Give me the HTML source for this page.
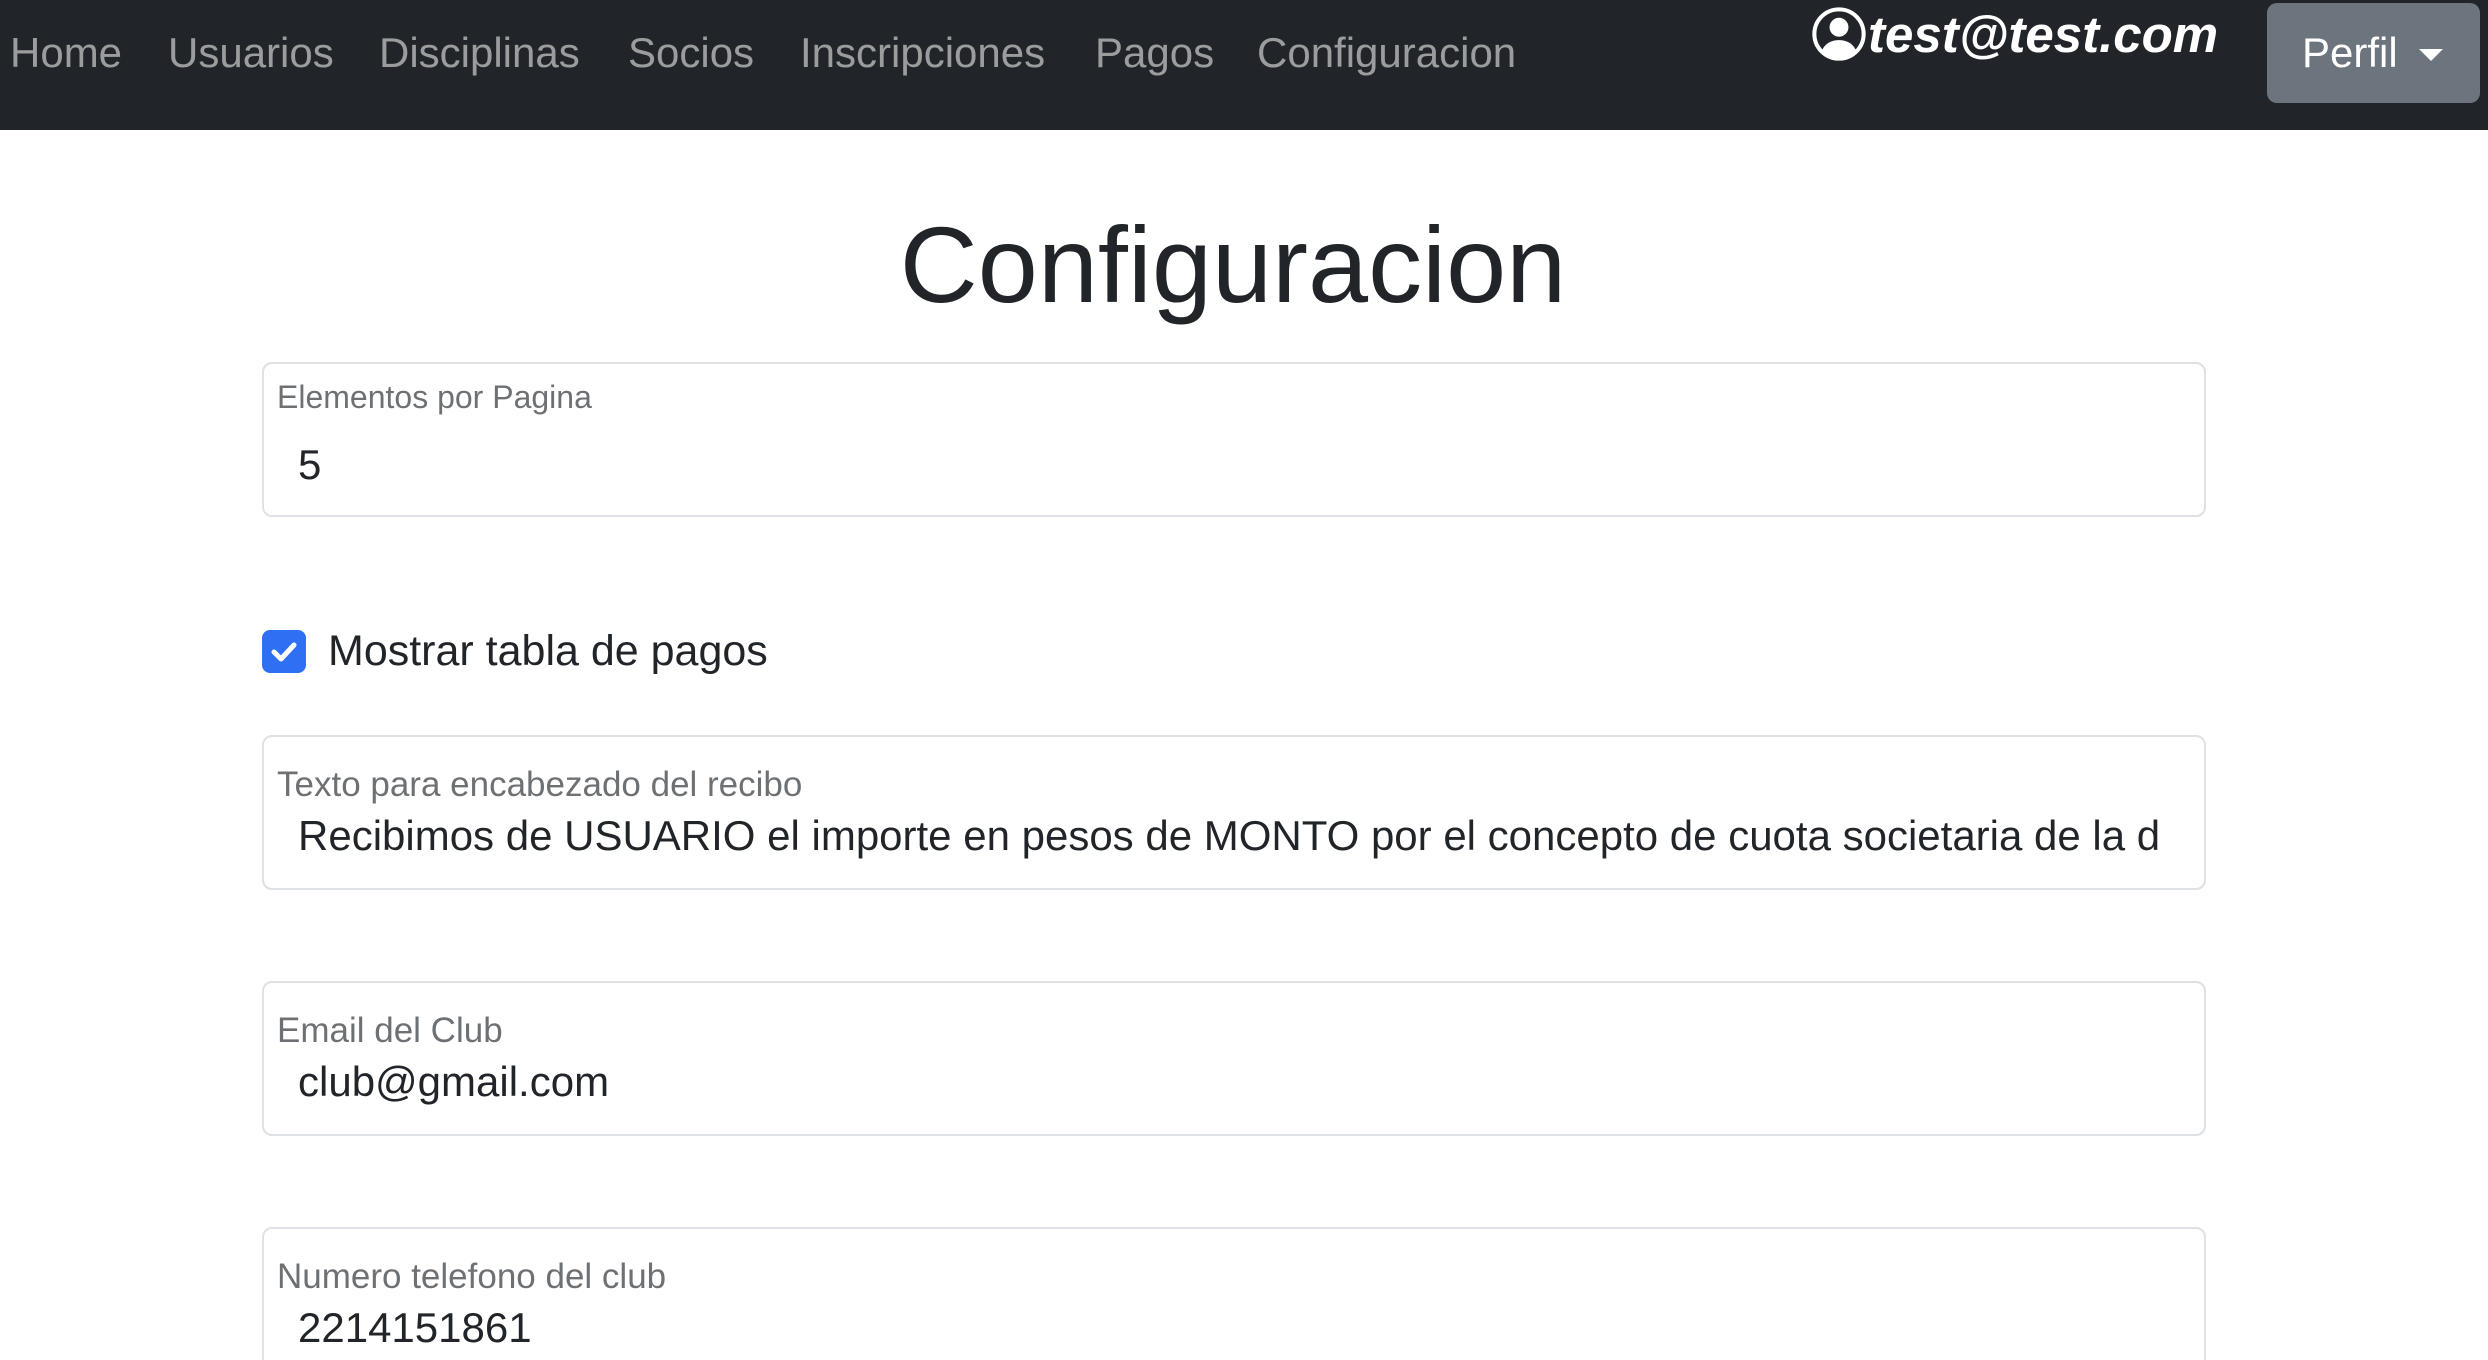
<!DOCTYPE html>
<html><head><meta charset="utf-8"><style>
*{margin:0;padding:0;box-sizing:border-box}
html,body{width:2488px;height:1360px;overflow:hidden}
body{background:#fff;font-family:"Liberation Sans",sans-serif;color:#212529;position:relative}
.nav{position:absolute;left:0;top:0;width:2488px;height:130px;background:#212529}
.nav a{position:absolute;top:28px;font-size:42px;color:rgba(255,255,255,.55);white-space:nowrap;line-height:50px}
.email{position:absolute;left:1812px;top:4px;height:60px;display:flex;align-items:center;color:#fff;font-style:italic;font-weight:bold;font-size:51px}
.btn{position:absolute;left:2267px;top:3px;width:213px;height:100px;background:#6c757d;border-radius:10px;color:#fff;font-size:42px;line-height:100px;padding-left:35px}
.btn:after{content:"";position:absolute;left:152px;top:46px;border-left:12px solid transparent;border-right:12px solid transparent;border-top:12px solid #fff}
h1{position:absolute;left:0;width:2466px;text-align:center;top:200px;font-size:108px;font-weight:normal;line-height:130px}
.box{position:absolute;left:262px;width:1944px;height:155px;border:2px solid #dee2e6;border-radius:10px;overflow:hidden}
.lbl{position:absolute;left:13px;font-size:35px;color:rgba(33,37,41,.65);line-height:40px;white-space:nowrap}
.val{position:absolute;left:34px;font-size:42px;line-height:48px;white-space:nowrap;overflow:hidden;width:1880px}
.cb{position:absolute;left:262px;top:630px;width:44px;height:43px;background:#2f6ff4;border-radius:8px}
.cbl{position:absolute;left:328px;top:625px;font-size:43px;line-height:52px}
</style></head><body>
<div class="nav">
<a style="left:10px">Home</a><a style="left:168px">Usuarios</a><a style="left:379px">Disciplinas</a><a style="left:628px">Socios</a><a style="left:800px">Inscripciones</a><a style="left:1095px">Pagos</a><a style="left:1257px">Configuracion</a>
<div class="email"><svg width="54" height="54" viewBox="0 0 16 16" style="margin-right:2px"><circle cx="8" cy="8" r="7.3" fill="none" stroke="#fff" stroke-width="1.2"/><circle cx="8" cy="6" r="2.8" fill="#fff"/><path d="M3 12.8C4 10.6 6 9.8 8 9.8s4 .8 5 3A7 7 0 0 1 3 12.8z" fill="#fff"/></svg>test@test.com</div>
<div class="btn">Perfil</div>
</div>
<h1>Configuracion</h1>
<div class="box" style="top:362px"><div class="lbl" style="top:13px;font-size:32px">Elementos por Pagina</div><div class="val" style="top:77px">5</div></div>
<div class="cb"><svg width="44" height="43" viewBox="0 0 44 43"><path d="M12 22l7 7 13-14" fill="none" stroke="#fff" stroke-width="5" stroke-linecap="round" stroke-linejoin="round"/></svg></div>
<div class="cbl">Mostrar tabla de pagos</div>
<div class="box" style="top:735px"><div class="lbl" style="top:28px">Texto para encabezado del recibo</div><div class="val" style="top:75px">Recibimos de USUARIO el importe en pesos de MONTO por el concepto de cuota societaria de la d</div></div>
<div class="box" style="top:981px"><div class="lbl" style="top:28px">Email del Club</div><div class="val" style="top:75px">club@gmail.com</div></div>
<div class="box" style="top:1227px;height:150px"><div class="lbl" style="top:28px">Numero telefono del club</div><div class="val" style="top:75px">2214151861</div></div>
</body></html>
